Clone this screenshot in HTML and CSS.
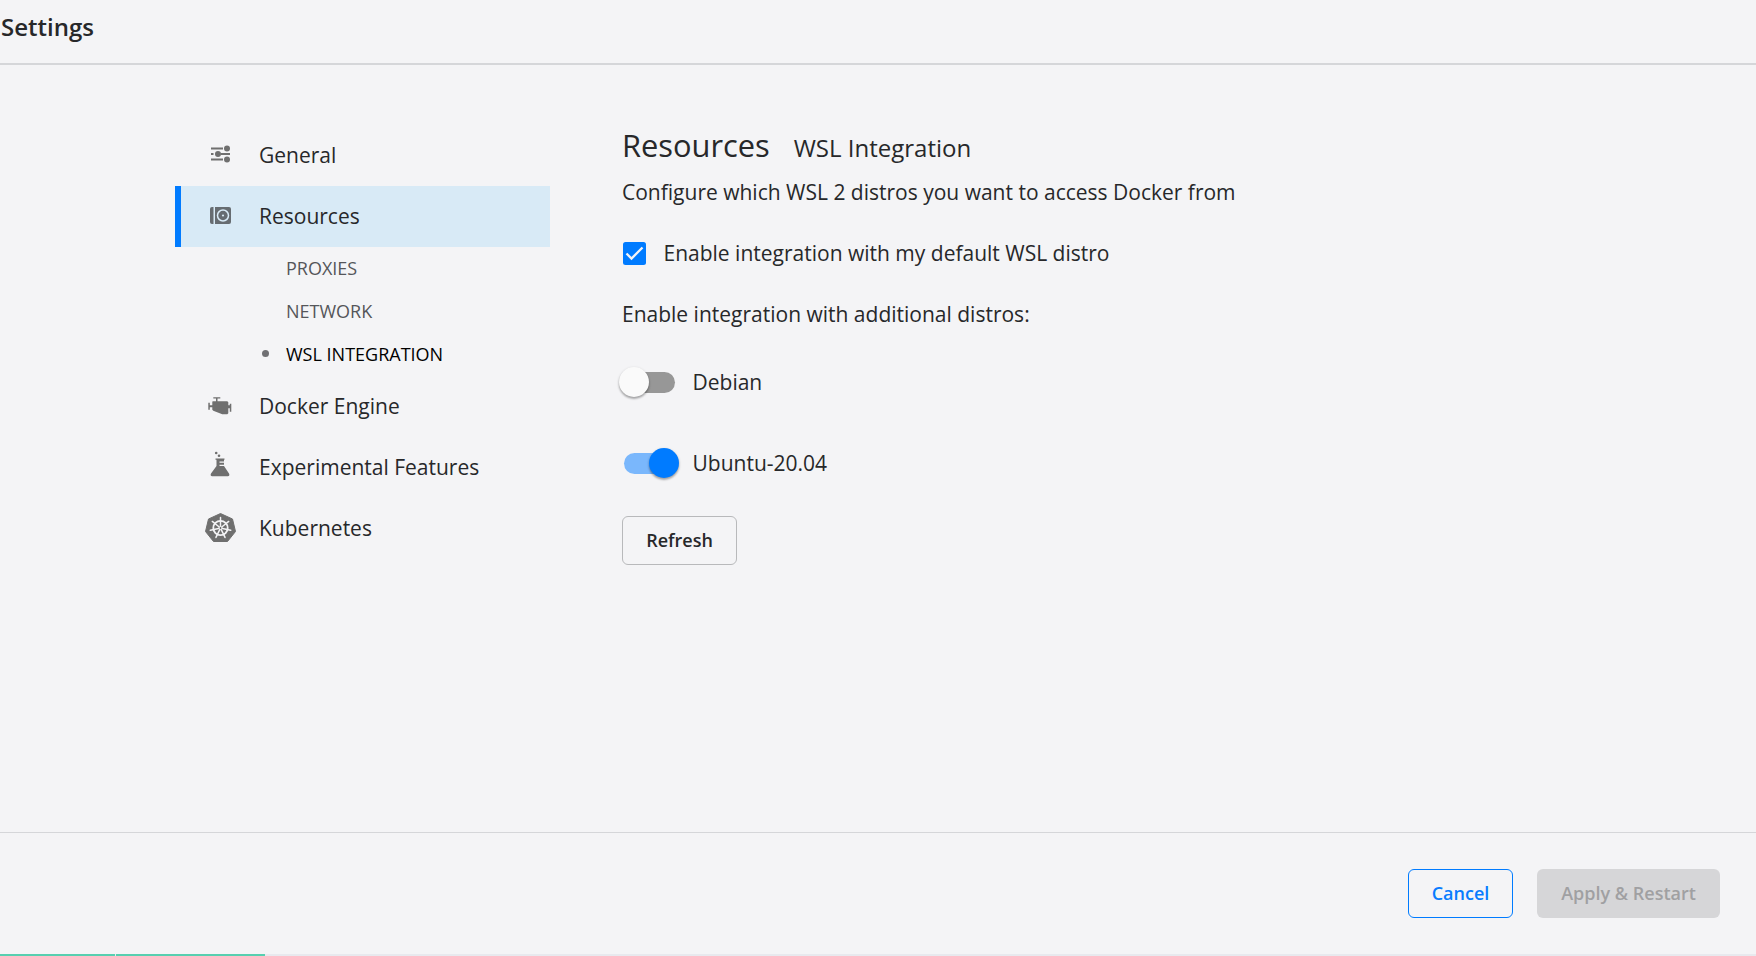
FILE: index.html
```html
<!DOCTYPE html>
<html lang="en">
<head>
<meta charset="utf-8">
<title>Settings</title>
<link rel="stylesheet" href="styles.css">
</head>
<body>
<div class="app">
  <header class="header"><h1 class="title">Settings</h1></header>
  <main class="main">
    <nav class="nav">
      <a class="nav-item">
        <svg class="icon" width="36" height="36" viewBox="0 0 36 36" fill="#6f6f6f">
          <path d="M9 10.500h12v2H9zM9 16h2.500v2H9zM19 16h9v2h-9zM9 21.500h12v2H9z"/>
          <circle cx="25" cy="11.500" r="3"/><circle cx="16" cy="17" r="3"/><circle cx="25" cy="22.500" r="3"/>
        </svg>
        <span>General</span>
      </a>
      <a class="nav-item nav-item-active">
        <svg class="icon" width="36" height="36" viewBox="0 0 36 36" fill="#666c71">
          <path d="M10 9h1.500v17H10a2 2 0 0 1-2-2V11a2 2 0 0 1 2-2z"/>
          <path d="M13 9h14a2 2 0 0 1 2 2v13a2 2 0 0 1-2 2H13z"/>
          <circle cx="21" cy="17.500" r="5.500" fill="none" stroke="#d8eaf6" stroke-width="1.500"/>
          <circle cx="21" cy="17.500" r="1.100" fill="#d8eaf6"/>
        </svg>
        <span>Resources</span>
      </a>
      <div class="subnav">
        <a class="sub-item">PROXIES</a>
        <a class="sub-item">NETWORK</a>
        <a class="sub-item sub-item-active"><i class="dot"></i>WSL INTEGRATION</a>
      </div>
      <a class="nav-item">
        <svg class="icon" width="36" height="36" viewBox="0 0 36 36" fill="#6f6f6f">
          <path transform="translate(-.7 .3)" d="M12 9h7v1.200h-2.800V13H26l1 1v3h1.500v-1.500H30v8h-1.500V20H27v5l-1 1h-5l-9-3.500-1-1V19H8.500v2.500H7v-7h1.500V17H11v-3.500l.5-.5h3.200v-2.800H12z"/>
        </svg>
        <span>Docker Engine</span>
      </a>
      <a class="nav-item">
        <svg class="icon" width="36" height="36" viewBox="0 0 36 36" fill="#6f6f6f">
          <circle cx="14.200" cy="4" r="1.300"/><circle cx="17" cy="6.700" r="1.300"/>
          <path d="M13.500 9.500h9v1.300H22v1.700h-4.500v1.300H22v2h-4.500v1.200H22l5 7.500c.8 1.600.2 2.800-1.200 2.800H10.200c-1.400 0-2-1.200-1.200-2.800l5.500-7.500v-6.200h-1z"/>
        </svg>
        <span>Experimental Features</span>
      </a>
      <a class="nav-item">
        <svg class="icon" width="36" height="36" viewBox="0 0 36 36">
          <path d="M18.500 3.500l12 5.500 3 12.500-8 10h-14l-8-10 3-12.500z" fill="#6f6f6f" stroke="#6f6f6f" stroke-width="1" stroke-linejoin="round"/>
          <g stroke="#f4f4f6" fill="none" transform="translate(18.500 18)">
            <circle r="7.200" stroke-width="1.800"/>
            <path stroke-width="1.500" stroke-linecap="round" d="M0-2V-10.500M1.560-1.250L8.200-6.540M1.950.44L10.200 2.330M.87 1.800L4.550 9.450M-.87 1.800L-4.550 9.450M-1.950.44L-10.200 2.330M-1.560-1.250L-8.200-6.540"/>
            <circle r="1.500" stroke-width="1"/>
          </g>
        </svg>
        <span>Kubernetes</span>
      </a>
    </nav>
    <section class="content">
      <div class="heading"><h2 class="heading-main">Resources</h2><h3 class="heading-sub">WSL Integration</h3></div>
      <p class="text">Configure which WSL 2 distros you want to access Docker from</p>
      <label class="check-row">
        <svg class="checkbox" width="23" height="23" viewBox="0 0 23 23"><rect width="23" height="23" rx="2.500" fill="#007bff"/><path d="M3.500 11.500l5 5L19.500 5.500" fill="none" stroke="#f4f4f6" stroke-width="2.300"/></svg>
        <span>Enable integration with my default WSL distro</span>
      </label>
      <p class="text text-additional">Enable integration with additional distros:</p>
      <div class="switch-row"><span class="switch"><i class="thumb"></i></span><span class="switch-label">Debian</span></div>
      <div class="switch-row"><span class="switch switch-on"><i class="thumb"></i></span><span class="switch-label">Ubuntu-20.04</span></div>
      <button class="btn btn-refresh">Refresh</button>
    </section>
  </main>
  <footer class="footer">
    <button class="btn btn-cancel">Cancel</button>
    <button class="btn btn-apply" disabled>Apply &amp; Restart</button>
  </footer>
  <div class="status"><i class="status-a"></i><i class="status-b"></i></div>
</div>
</body>
</html>
```
FILE: styles.css
```css
* { box-sizing: border-box; }
body { margin: 0; background: #f4f4f6; color: #27282a; font-family: "Open Sans", "Noto Sans", sans-serif; font-size: 21px; font-weight: 400; }
h1, h2, h3, p { margin: 0; font-weight: inherit; }
.app { height: 956px; display: flex; flex-direction: column; overflow: hidden; }
.header { height: 65px; border-bottom: 2px solid #d5d6d9; padding: 9px 0 0 1px; }
.title { font-size: 24px; line-height: 36px; font-weight: 600; }
.main { flex: 1; display: flex; gap: 72px; padding: 60px 0 0 175px; }
.nav { width: 375px; }
.nav-item { height: 61px; display: flex; align-items: center; gap: 21px; padding: 0 0 1px 21px; border-left: 6px solid transparent; line-height: 28px; }
.icon { flex: none; }
.nav-item-active { background: #d8eaf6; border-color: #007bff; }
.sub-item { height: 43px; display: flex; align-items: center; padding: 0 0 2px 111px; font-size: 18px; color: #55565a; }
.sub-item-active { color: #000; padding-left: 87px; }
.dot { width: 7px; height: 7px; border-radius: 50%; background: #707073; margin-right: 17px; }
.content { flex: 1; }
.heading { display: flex; align-items: baseline; gap: 24px; height: 48px; line-height: 40px; }
.heading-main { font-size: 30.8px; }
.heading-sub { font-size: 24px; }
.text { line-height: 38px; }
.check-row { display: flex; align-items: center; gap: 17.500px; height: 38px; margin: 23px 0; padding-left: 1px; }
.switch-row { display: flex; align-items: center; gap: 17.500px; height: 81px; padding-left: 2px; }
.switch-label { padding-bottom: 2px; }
.text-additional { margin-bottom: 9px; }
.switch { position: relative; width: 51px; height: 21px; border-radius: 11px; background: #979797; }
.switch-on { background: #7ab7fc; }
.thumb { position: absolute; left: -5px; top: -5px; width: 30px; height: 30px; border-radius: 50%; background: #fafafa; box-shadow: 0 2px 2px rgba(0,0,0,.22), 0 1px 3px rgba(0,0,0,.2); }
.switch-on .thumb { left: 25px; background: #007bff; }
.btn { height: 49px; border-radius: 6px; border: 1px solid #b8b9bb; background: transparent; font: 600 18px "Open Sans", sans-serif; color: #27282a; padding: 0 0 1px; }
.btn-refresh { width: 115px; margin-top: 12px; display: block; }
.footer { height: 122px; border-top: 1px solid #d5d6d9; display: flex; gap: 24px; justify-content: flex-end; padding: 36px 36px 0 0; }
.btn-cancel { width: 105px; border-color: #007bff; color: #087cff; }
.btn-apply { width: 183px; border: 0; background: #d6d6d8; color: #a0a0a2; }
.status { height: 2px; background: #e8e9ee; display: flex; gap: 1px; }
.status-a { width: 115px; background: #57cfb0; }
.status-b { width: 149px; background: #57cfb0; }
```
